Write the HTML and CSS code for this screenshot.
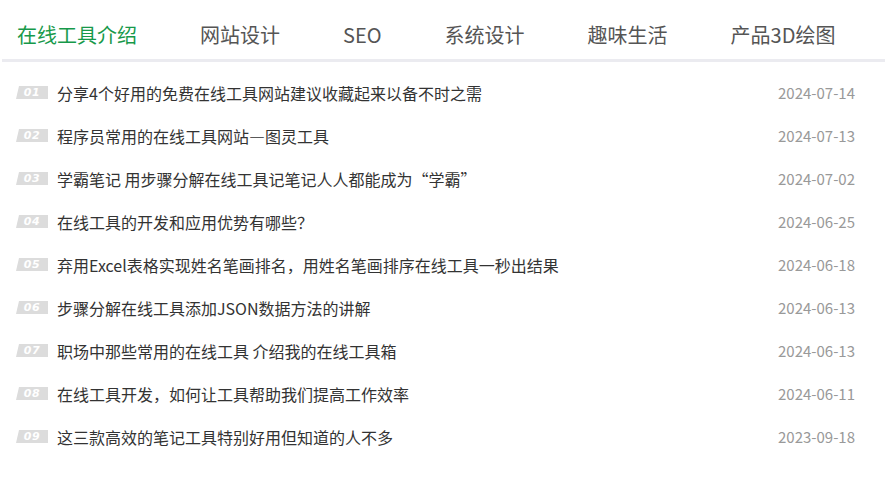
FILE: index.html
```html
<!DOCTYPE html>
<html lang="zh-CN">
<head>
<meta charset="utf-8">
<title>在线工具介绍</title>
<link rel="stylesheet" href="styles.css">
</head>
<body>
<div class="box">
  <nav class="tabs">
    <a class="tab active">在线工具介绍</a>
    <a class="tab">网站设计</a>
    <a class="tab">SEO</a>
    <a class="tab">系统设计</a>
    <a class="tab">趣味生活</a>
    <a class="tab">产品3D绘图</a>
  </nav>
  <ul class="list">
    <li class="row"><span class="num">01</span><a class="title">分享4个好用的免费在线工具网站建议收藏起来以备不时之需</a><span class="date">2024-07-14</span></li>
    <li class="row"><span class="num">02</span><a class="title">程序员常用的在线工具网站—图灵工具</a><span class="date">2024-07-13</span></li>
    <li class="row"><span class="num">03</span><a class="title">学霸笔记 用步骤分解在线工具记笔记人人都能成为“学霸”</a><span class="date">2024-07-02</span></li>
    <li class="row"><span class="num">04</span><a class="title">在线工具的开发和应用优势有哪些？</a><span class="date">2024-06-25</span></li>
    <li class="row"><span class="num">05</span><a class="title">弃用Excel表格实现姓名笔画排名，用姓名笔画排序在线工具一秒出结果</a><span class="date">2024-06-18</span></li>
    <li class="row"><span class="num">06</span><a class="title">步骤分解在线工具添加JSON数据方法的讲解</a><span class="date">2024-06-13</span></li>
    <li class="row"><span class="num">07</span><a class="title">职场中那些常用的在线工具 介绍我的在线工具箱</a><span class="date">2024-06-13</span></li>
    <li class="row"><span class="num">08</span><a class="title">在线工具开发，如何让工具帮助我们提高工作效率</a><span class="date">2024-06-11</span></li>
    <li class="row"><span class="num">09</span><a class="title">这三款高效的笔记工具特别好用但知道的人不多</a><span class="date">2023-09-18</span></li>
  </ul>
</div>
</body>
</html>
```
FILE: styles.css
```css
html, body {
  margin: 0;
  padding: 0;
  background: #fff;
}
body {
  font-family: "Microsoft YaHei", "Noto Sans CJK SC", sans-serif;
  color: #333;
}
.box {
  width: 883px;
  margin-left: 2px;
}
.tabs {
  display: flex;
  height: 59px;
  padding-left: 15px;
  border-bottom: 3px solid #ebebf0;
  box-sizing: content-box;
  align-items: center;
}
.tab {
  font-size: 20px;
  color: #555;
  margin-right: 63px;
  white-space: nowrap;
  line-height: 28px;
  padding-top: 10px;
}
.tab.active {
  color: #17994a;
}
.list {
  list-style: none;
  margin: 0;
  padding: 9px 0 0 0;
}
.row {
  display: flex;
  align-items: center;
  height: 43px;
  padding-left: 14px;
  padding-right: 30px;
}
.num {
  width: 32px;
  height: 13px;
  background: #dcdcdc;
  color: #fff;
  font-family: "DejaVu Sans", sans-serif;
  font-weight: bold;
  font-style: italic;
  font-size: 11px;
  line-height: 13px;
  text-align: center;
  margin-right: 9px;
  flex: none;
  clip-path: polygon(3px 0, 100% 0, 100% 100%, 0 100%);
  letter-spacing: 0.5px;
}
.title {
  flex: 1;
  font-size: 16px;
  color: #333;
  white-space: nowrap;
}
.date {
  font-size: 15px;
  color: #999;
}
```
